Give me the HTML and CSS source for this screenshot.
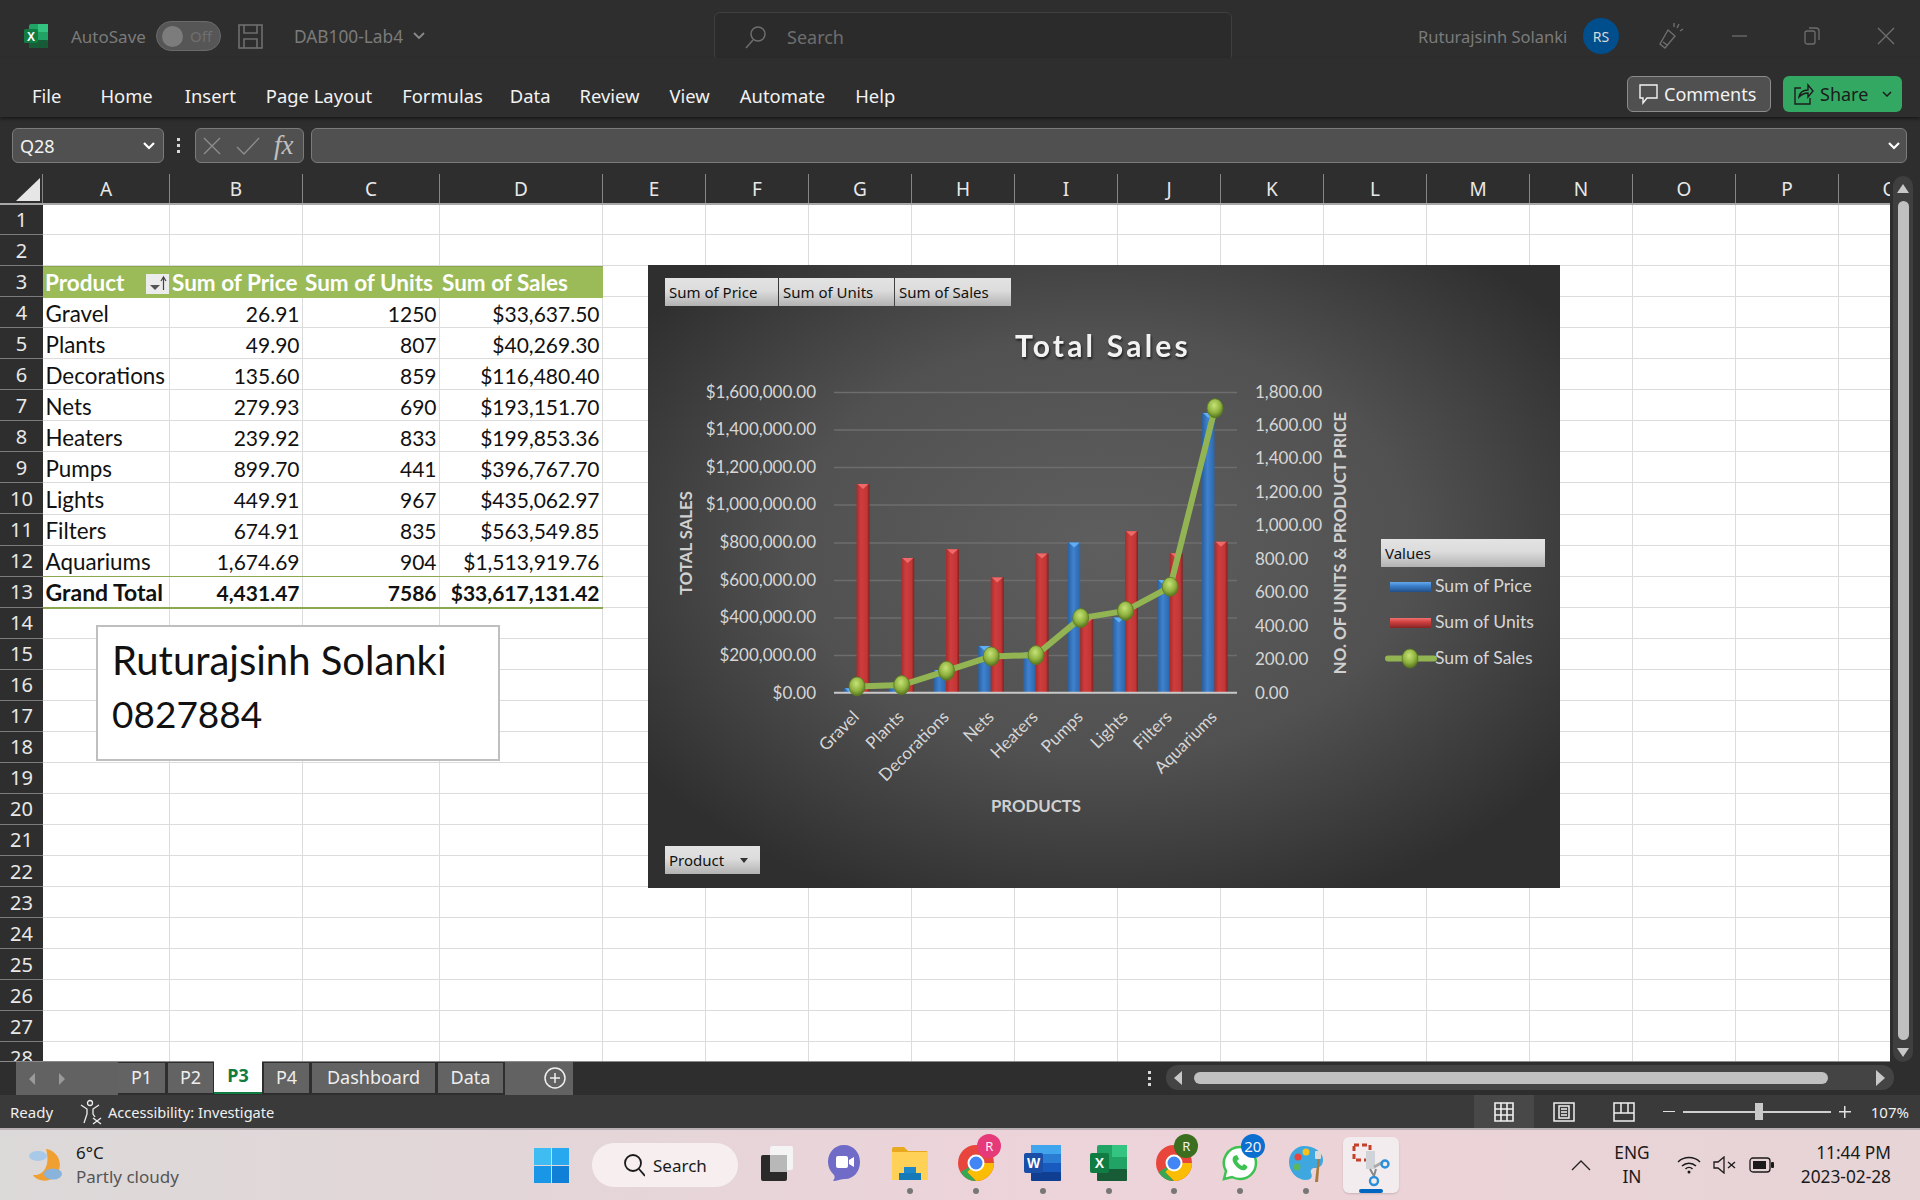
FILE: index.html
```html
<!DOCTYPE html>
<html lang="en">
<head>
    <meta charset="UTF-8">
    <title>DAB100-Lab4 - Excel</title>
    <link rel="stylesheet" href="styles.css">
</head>
<body>
<div class="window">

    <!-- title bar -->
    <header class="titlebar">
        <div class="title-left">
            <svg class="xl-logo" width="24" height="24" viewBox="0 0 24 24">
                <rect x="5" y="0" width="19" height="24" rx="2" fill="#21a366"/>
                <rect x="14" y="0" width="10" height="8" fill="#33c481"/>
                <rect x="5" y="16" width="19" height="8" rx="1" fill="#185c37"/>
                <rect x="0" y="5" width="14" height="14" rx="1.5" fill="#107c41"/>
                <text x="7" y="16.5" text-anchor="middle" class="xl-letter">X</text>
            </svg>
            <span class="autosave">AutoSave</span>
            <span class="toggle"><i class="knob"></i><span>Off</span></span>
            <svg class="save-icon" width="25" height="25" viewBox="0 0 25 25" fill="none" stroke="#6e6e6e" stroke-width="1.6">
                <rect x="1" y="1" width="23" height="23"/>
                <path d="M6 1v8h13V1M6 24v-9h13v9"/>
            </svg>
            <span class="docname">DAB100-Lab4</span>
            <svg width="12" height="8" viewBox="0 0 12 8" fill="none" stroke="#8a8a8a" stroke-width="1.8"><path d="M1 1l5 5 5-5"/></svg>
        </div>
        <div class="title-search">
            <svg width="22" height="24" viewBox="0 0 22 24" fill="none" stroke="#6e6e6e" stroke-width="1.5"><circle cx="13" cy="9" r="7"/><path d="M8 15L1 23"/></svg>
            <span>Search</span>
        </div>
        <div class="title-right">
            <span class="username">Ruturajsinh Solanki</span>
            <span class="avatar">RS</span>
            <svg class="pen" width="26" height="28" viewBox="0 0 26 28" fill="none" stroke="#6e6e6e" stroke-width="1.4"><path d="M10 8L2 22l5 4 10-12zM5 20l4 3M19 6l2-4M22 9l3-2M16 5l0-4"/></svg>
            <svg class="win-btn" width="16" height="16" viewBox="0 0 16 16" stroke="#6e6e6e" stroke-width="1.3"><path d="M0 8h15"/></svg>
            <svg class="win-btn" width="16" height="18" viewBox="0 0 16 18" fill="none" stroke="#6e6e6e" stroke-width="1.3"><rect x="1" y="4" width="10" height="13" rx="2"/><path d="M5 1h7a3 3 0 0 1 3 3v9"/></svg>
            <svg class="win-btn" width="20" height="20" viewBox="0 0 20 20" stroke="#6e6e6e" stroke-width="1.4"><path d="M2 2l16 16M18 2L2 18"/></svg>
        </div>
    </header>

    <!-- ribbon tabs -->
    <nav class="menubar">
        <ul class="menu">
            <li class="menu-file">File</li>
            <li class="menu-home">Home</li>
            <li>Insert</li>
            <li>Page Layout</li>
            <li class="menu-formulas">Formulas</li>
            <li class="menu-data">Data</li>
            <li>Review</li>
            <li>View</li>
            <li>Automate</li>
            <li>Help</li>
        </ul>
        <div class="menu-actions">
            <button class="btn-comments">
                <svg width="20" height="22" viewBox="0 0 20 22" fill="none" stroke="#f2f2f2" stroke-width="1.4"><path d="M1 2h17v13H8l-4 5v-5H1z"/></svg>
                Comments
            </button>
            <button class="btn-share">
                <svg width="20" height="22" viewBox="0 0 20 22" fill="none" stroke="#1c1c1c" stroke-width="1.4"><path d="M7 5H1v16h15v-6M5 14c1-5 5-7 9-7V2l5 6-5 6V10c-3 0-6 1-9 4z"/></svg>
                <span>Share</span>
                <svg class="share-arrow" width="10" height="6" viewBox="0 0 10 6" fill="none" stroke="#1c1c1c" stroke-width="1.5"><path d="M1 1l4 4 4-4"/></svg>
            </button>
        </div>
    </nav>

    <!-- formula bar -->
    <div class="formulabar">
        <div class="namebox">
            <span>Q28</span>
            <svg width="12" height="8" viewBox="0 0 12 8" fill="none" stroke="#fff" stroke-width="2.2"><path d="M1 1l5 5 5-5"/></svg>
        </div>
        <div class="fb-dots"><i></i><i></i><i></i></div>
        <div class="fx-box">
            <svg width="20" height="20" viewBox="0 0 20 20" stroke="#8e8e8e" stroke-width="1.3"><path d="M2 2l16 16M18 2L2 18"/></svg>
            <svg width="24" height="20" viewBox="0 0 24 20" fill="none" stroke="#8e8e8e" stroke-width="1.3"><path d="M1 11l7 7L23 2"/></svg>
            <span class="fx">fx</span>
        </div>
        <div class="formula-input">
            <svg width="12" height="8" viewBox="0 0 12 8" fill="none" stroke="#fff" stroke-width="2.2"><path d="M1 1l5 5 5-5"/></svg>
        </div>
    </div>

    <!-- worksheet -->
    <section class="sheet">
        <div class="sheet-main">
            <div class="col-head">
                <div class="corner"><svg width="24" height="23" viewBox="0 0 24 23"><path d="M24 0v23H0z" fill="#e6e6e6"/></svg></div>
                <div>A</div><div>B</div><div>C</div><div>D</div><div>E</div><div>F</div><div>G</div><div>H</div><div>I</div>
                <div>J</div><div>K</div><div>L</div><div>M</div><div>N</div><div>O</div><div>P</div><div>Q</div>
            </div>
            <div class="sheet-body">
                <div class="row-head">
                    <div>1</div><div>2</div><div>3</div><div>4</div><div>5</div><div>6</div><div>7</div>
                    <div>8</div><div>9</div><div>10</div><div>11</div><div>12</div><div>13</div><div>14</div>
                    <div>15</div><div>16</div><div>17</div><div>18</div><div>19</div><div>20</div><div>21</div>
                    <div>22</div><div>23</div><div>24</div><div>25</div><div>26</div><div>27</div><div>28</div>
                </div>
                <div class="cells">
                    <table class="pivot">
                        <colgroup><col class="w-a"><col class="w-b"><col class="w-c"><col class="w-d"></colgroup>
                        <thead>
                            <tr>
                                <th class="th-product">Product
                                    <span class="sort-btn"><svg width="23" height="20" viewBox="0 0 23 20"><path d="M4 11h10l-5 5z" fill="#555"/><path d="M17.5 16V4M15 7l2.5-4L20 7" stroke="#444" stroke-width="1.2" fill="none"/></svg></span>
                                </th>
                                <th>Sum of Price</th><th>Sum of Units</th><th>Sum of Sales</th>
                            </tr>
                        </thead>
                        <tbody>
                            <tr><td>Gravel</td><td>26.91</td><td>1250</td><td>$33,637.50</td></tr>
                            <tr><td>Plants</td><td>49.90</td><td>807</td><td>$40,269.30</td></tr>
                            <tr><td>Decorations</td><td>135.60</td><td>859</td><td>$116,480.40</td></tr>
                            <tr><td>Nets</td><td>279.93</td><td>690</td><td>$193,151.70</td></tr>
                            <tr><td>Heaters</td><td>239.92</td><td>833</td><td>$199,853.36</td></tr>
                            <tr><td>Pumps</td><td>899.70</td><td>441</td><td>$396,767.70</td></tr>
                            <tr><td>Lights</td><td>449.91</td><td>967</td><td>$435,062.97</td></tr>
                            <tr><td>Filters</td><td>674.91</td><td>835</td><td>$563,549.85</td></tr>
                            <tr><td>Aquariums</td><td>1,674.69</td><td>904</td><td>$1,513,919.76</td></tr>
                        </tbody>
                        <tfoot>
                            <tr><td>Grand Total</td><td>4,431.47</td><td>7586</td><td>$33,617,131.42</td></tr>
                        </tfoot>
                    </table>

                    <div class="textbox">Ruturajsinh Solanki<br><span class="textbox-id">0827884</span></div>

                    <div class="chart">
                        <svg width="912" height="623" viewBox="648 265 912 623">
                            <defs>
                                <radialGradient id="chart-bg" cx="50%" cy="45%" r="62%">
                                    <stop offset="0" stop-color="#5e5e5e"/>
                                    <stop offset="0.55" stop-color="#515151"/>
                                    <stop offset="1" stop-color="#2f2f2f"/>
                                </radialGradient>
                                <linearGradient id="red-bar">
                                    <stop offset="0" stop-color="#a52d2d"/>
                                    <stop offset="0.35" stop-color="#cf3d3d"/>
                                    <stop offset="0.8" stop-color="#c23636"/>
                                    <stop offset="1" stop-color="#7f2020"/>
                                </linearGradient>
                                <linearGradient id="blue-bar">
                                    <stop offset="0" stop-color="#2a5f9e"/>
                                    <stop offset="0.45" stop-color="#3f82cf"/>
                                    <stop offset="1" stop-color="#2c66aa"/>
                                </linearGradient>
                                <radialGradient id="dot" cx="45%" cy="35%" r="65%">
                                    <stop offset="0" stop-color="#c6e277"/>
                                    <stop offset="0.6" stop-color="#8fb23f"/>
                                    <stop offset="1" stop-color="#56731f"/>
                                </radialGradient>
                                <linearGradient id="key-blue" x2="0" y2="1">
                                    <stop offset="0" stop-color="#64a8ee"/>
                                    <stop offset="0.4" stop-color="#3b7fcb"/>
                                    <stop offset="1" stop-color="#224f86"/>
                                </linearGradient>
                                <linearGradient id="key-red" x2="0" y2="1">
                                    <stop offset="0" stop-color="#f07070"/>
                                    <stop offset="0.4" stop-color="#d04040"/>
                                    <stop offset="1" stop-color="#842424"/>
                                </linearGradient>
                                <polygon id="cap-red" points="1,0 12,0 6.5,5" fill="#ee6a6a"/>
                                <polygon id="cap-blue" points="1,0 12,0 6.5,5" fill="#62aef2"/>
                                <ellipse id="mark" rx="8" ry="9.5" fill="url(#dot)" stroke="#5a7a22" stroke-width="0.8"/>
                            </defs>

                            <rect x="648" y="265" width="912" height="623" fill="url(#chart-bg)"/>

                            <g class="gridlines">
                                <path d="M834 392.5H1237M834 430H1237M834 467.5H1237M834 505H1237M834 543H1237M834 580.5H1237M834 618H1237M834 655.5H1237"/>
                            </g>

                            <g class="tick-l">
                                <text x="816" y="398">$1,600,000.00</text>
                                <text x="816" y="435">$1,400,000.00</text>
                                <text x="816" y="473">$1,200,000.00</text>
                                <text x="816" y="510">$1,000,000.00</text>
                                <text x="816" y="548">$800,000.00</text>
                                <text x="816" y="586">$600,000.00</text>
                                <text x="816" y="623">$400,000.00</text>
                                <text x="816" y="661">$200,000.00</text>
                                <text x="816" y="699">$0.00</text>
                            </g>
                            <g class="tick-r">
                                <text x="1255" y="398">1,800.00</text>
                                <text x="1255" y="431">1,600.00</text>
                                <text x="1255" y="464">1,400.00</text>
                                <text x="1255" y="498">1,200.00</text>
                                <text x="1255" y="531">1,000.00</text>
                                <text x="1255" y="565">800.00</text>
                                <text x="1255" y="598">600.00</text>
                                <text x="1255" y="632">400.00</text>
                                <text x="1255" y="665">200.00</text>
                                <text x="1255" y="699">0.00</text>
                            </g>

                            <!-- price bars -->
                            <g fill="url(#blue-bar)">
                                <rect x="844" y="688.2" width="12.5" height="4.5"/><use href="#cap-blue" x="844" y="688.2"/>
                                <rect x="888.7" y="684.4" width="12.5" height="8.3"/><use href="#cap-blue" x="888.7" y="684.4"/>
                                <rect x="933.5" y="670" width="12.5" height="22.7"/><use href="#cap-blue" x="933.5" y="670"/>
                                <rect x="978.2" y="645.9" width="12.5" height="46.8"/><use href="#cap-blue" x="978.2" y="645.9"/>
                                <rect x="1023" y="652.6" width="12.5" height="40.1"/><use href="#cap-blue" x="1023" y="652.6"/>
                                <rect x="1067.7" y="542.4" width="12.5" height="150.3"/><use href="#cap-blue" x="1067.7" y="542.4"/>
                                <rect x="1112.5" y="617.5" width="12.5" height="75.2"/><use href="#cap-blue" x="1112.5" y="617.5"/>
                                <rect x="1157.2" y="580" width="12.5" height="112.7"/><use href="#cap-blue" x="1157.2" y="580"/>
                                <rect x="1202" y="412.9" width="12.5" height="279.8"/><use href="#cap-blue" x="1202" y="412.9"/>
                            </g>
                            <!-- units bars -->
                            <g fill="url(#red-bar)">
                                <rect x="856.5" y="483.9" width="13" height="208.8"/><use href="#cap-red" x="856.5" y="483.9"/>
                                <rect x="901.2" y="557.9" width="13" height="134.8"/><use href="#cap-red" x="901.2" y="557.9"/>
                                <rect x="946" y="549.2" width="13" height="143.5"/><use href="#cap-red" x="946" y="549.2"/>
                                <rect x="990.7" y="577.4" width="13" height="115.3"/><use href="#cap-red" x="990.7" y="577.4"/>
                                <rect x="1035.5" y="553.5" width="13" height="139.2"/><use href="#cap-red" x="1035.5" y="553.5"/>
                                <rect x="1080.2" y="619" width="13" height="73.7"/><use href="#cap-red" x="1080.2" y="619"/>
                                <rect x="1125" y="531.2" width="13" height="161.5"/><use href="#cap-red" x="1125" y="531.2"/>
                                <rect x="1169.7" y="553.2" width="13" height="139.5"/><use href="#cap-red" x="1169.7" y="553.2"/>
                                <rect x="1214.5" y="541.7" width="13" height="151"/><use href="#cap-red" x="1214.5" y="541.7"/>
                            </g>
                            <path class="axis" d="M834 692.7H1237"/>

                            <polyline class="sales-line" points="857,686.4 901.7,685.1 946.5,670.8 991.2,656.4 1036,655.1 1080.7,618.1 1125.5,610.9 1170.2,586.8 1215,408.2"/>
                            <use href="#mark" x="857" y="686.4"/>
                            <use href="#mark" x="901.7" y="685.1"/>
                            <use href="#mark" x="946.5" y="670.8"/>
                            <use href="#mark" x="991.2" y="656.4"/>
                            <use href="#mark" x="1036" y="655.1"/>
                            <use href="#mark" x="1080.7" y="618.1"/>
                            <use href="#mark" x="1125.5" y="610.9"/>
                            <use href="#mark" x="1170.2" y="586.8"/>
                            <use href="#mark" x="1215" y="408.2"/>

                            <g class="cat-labels">
                                <text transform="translate(860,718) rotate(-45)">Gravel</text>
                                <text transform="translate(905,718) rotate(-45)">Plants</text>
                                <text transform="translate(950,718) rotate(-45)">Decorations</text>
                                <text transform="translate(995,718) rotate(-45)">Nets</text>
                                <text transform="translate(1039,718) rotate(-45)">Heaters</text>
                                <text transform="translate(1084,718) rotate(-45)">Pumps</text>
                                <text transform="translate(1129,718) rotate(-45)">Lights</text>
                                <text transform="translate(1173,718) rotate(-45)">Filters</text>
                                <text transform="translate(1218,718) rotate(-45)">Aquariums</text>
                            </g>

                            <text class="chart-title" x="1103" y="357">Total Sales</text>
                            <text class="axis-title" transform="translate(692,543) rotate(-90)">TOTAL SALES</text>
                            <text class="axis-title" transform="translate(1346,543) rotate(-90)">NO. OF UNITS &amp; PRODUCT PRICE</text>
                            <text class="axis-title" x="1036" y="812">PRODUCTS</text>

                            <!-- legend keys -->
                            <rect x="1390" y="582" width="41" height="10" fill="url(#key-blue)"/>
                            <rect x="1390" y="618" width="41" height="10" fill="url(#key-red)"/>
                            <path class="legend-line" d="M1388 658.5H1434"/>
                            <use href="#mark" x="1410" y="658.5"/>
                            <g class="legend-text">
                                <text x="1435" y="592">Sum of Price</text>
                                <text x="1435" y="628">Sum of Units</text>
                                <text x="1435" y="664">Sum of Sales</text>
                            </g>
                        </svg>
                        <div class="field-row">
                            <span class="field w-price">Sum of Price</span>
                            <span class="field w-units">Sum of Units</span>
                            <span class="field w-sales">Sum of Sales</span>
                        </div>
                        <span class="field field-values">Values</span>
                        <span class="field field-product">Product<i class="field-caret"></i></span>
                    </div>
                </div>
            </div>
        </div>
        <aside class="vscroll">
            <div class="vtrack">
                <i class="tri-up"></i>
                <div class="vthumb"></div>
                <i class="tri-down"></i>
            </div>
        </aside>
    </section>

    <!-- sheet tabs -->
    <div class="tabbar">
        <div class="tab-nav"><i class="tri-left"></i><i class="tri-right"></i></div>
        <div class="tab">P1</div>
        <div class="tab">P2</div>
        <div class="tab active">P3</div>
        <div class="tab">P4</div>
        <div class="tab">Dashboard</div>
        <div class="tab">Data</div>
        <div class="tab-add">
            <svg width="24" height="24" viewBox="0 0 24 24" fill="none" stroke="#f0f0f0" stroke-width="1.5"><circle cx="12" cy="12" r="10"/><path d="M12 7v10M7 12h10"/></svg>
        </div>
        <div class="tab-dots"><i></i><i></i><i></i></div>
        <div class="hscroll">
            <i class="hs-left"></i>
            <div class="hthumb"></div>
            <i class="hs-right"></i>
        </div>
    </div>

    <!-- status bar -->
    <footer class="statusbar">
        <span class="ready">Ready</span>
        <svg class="a11y" width="24" height="26" viewBox="0 0 24 26" fill="none" stroke="#eee" stroke-width="1.3"><circle cx="10" cy="4" r="2.5"/><path d="M1 6l6 4v5l-3 9M19 6l-6 4v5l2 3M13 19l8 6M21 19l-8 6"/></svg>
        <span class="a11y-text">Accessibility: Investigate</span>
        <div class="status-right">
            <div class="view-btn active">
                <svg width="20" height="20" viewBox="0 0 20 20" fill="none" stroke="#f0f0f0" stroke-width="1.6"><path d="M1 1h18v18H1zM7 1v18M13 1v18M1 7h18M1 13h18"/></svg>
            </div>
            <div class="view-btn">
                <svg width="22" height="20" viewBox="0 0 22 20" fill="none" stroke="#f0f0f0" stroke-width="1.5"><rect x="1" y="1" width="20" height="18"/><rect x="6" y="4" width="10" height="12"/><path d="M8 7h6M8 10h6M8 13h6"/></svg>
            </div>
            <div class="view-btn">
                <svg width="22" height="20" viewBox="0 0 22 20" fill="none" stroke="#f0f0f0" stroke-width="1.5"><path d="M1 1h20v18H1zM8 1v10h7V1M1 11h7M15 11h6"/></svg>
            </div>
            <div class="zoom">
                <span class="zoom-minus"></span>
                <div class="zoom-track"><i class="zoom-thumb"></i></div>
                <span class="zoom-plus"></span>
            </div>
            <span class="zoom-pct">107%</span>
        </div>
    </footer>

    <!-- windows taskbar -->
    <div class="taskbar">
        <div class="weather">
            <svg width="36" height="36" viewBox="0 0 36 36">
                <path d="M18 2a16 16 0 0 1 3 31c-6 2-14-1-16-5 9 1 18-7 13-26z" fill="#f0a030"/>
                <ellipse cx="10" cy="9" rx="9" ry="5" fill="#a9c9e8"/>
                <ellipse cx="25" cy="27" rx="9" ry="5.5" fill="#8ab3dc"/>
            </svg>
            <div class="weather-text">
                <div class="temp">6°C</div>
                <div class="sky">Partly cloudy</div>
            </div>
        </div>
        <div class="tb-center">
            <svg class="win-logo" width="35" height="35" viewBox="0 0 35 35">
                <rect width="17" height="17" x="0" y="0" fill="#3fbdf3"/>
                <rect width="17" height="17" x="18" y="0" fill="#28a8ee"/>
                <rect width="17" height="17" x="0" y="18" fill="#1a96e6"/>
                <rect width="17" height="17" x="18" y="18" fill="#0f7fd8"/>
            </svg>
            <div class="tb-search">
                <svg width="22" height="24" viewBox="0 0 22 24" fill="none" stroke="#1a1a1a" stroke-width="1.8"><circle cx="10" cy="10" r="8"/><path d="M16 16l6 7"/></svg>
                <span>Search</span>
            </div>
            <div class="tb-app">
                <svg width="36" height="36" viewBox="0 0 36 36"><rect x="11" y="1" width="23" height="24" rx="2" fill="#f4f4f4"/><rect x="2" y="10" width="26" height="26" rx="2" fill="#2a2a2a"/><rect x="11" y="10" width="17" height="17" fill="#b8b8b8"/></svg>
            </div>
            <div class="tb-app">
                <svg width="36" height="38" viewBox="0 0 36 38"><path d="M18 1c10 0 16 8 16 17s-6 17-15 17c-4 0-8 2-12 2 2-3 2-4 1-6-4-4-6-8-6-13C2 9 8 1 18 1z" fill="#6f6bc6"/><rect x="10" y="12" width="12" height="12" rx="2" fill="#fff"/><path d="M23 16l5-3v10l-5-3z" fill="#fff"/></svg>
            </div>
            <div class="tb-app running">
                <svg width="38" height="36" viewBox="0 0 38 36"><path d="M1 4a2 2 0 0 1 2-2h10l4 4h18a2 2 0 0 1 2 2v26H1z" fill="#e8a91e"/><rect x="1" y="7" width="36" height="28" fill="#ffd257"/><path d="M13 22h12v6h-12z" fill="#1c86c8"/><path d="M8 28h22v7H8z" fill="#1679b8"/></svg>
            </div>
            <div class="tb-app running">
                <svg class="chrome" width="36" height="36" viewBox="0 0 36 36"><circle cx="18" cy="18" r="18" fill="#e8453c"/><path d="M18 18H36A18 18 0 0 1 18 36L9 27z" fill="#fbbc04"/><path d="M18 18L9 27l9 9A18 18 0 0 1 2.5 27z" fill="#34a853"/><circle cx="18" cy="18" r="8.5" fill="#fff"/><circle cx="18" cy="18" r="6.5" fill="#4285f4"/></svg>
                <span class="badge badge-pink">R</span>
            </div>
            <div class="tb-app running">
                <svg width="38" height="36" viewBox="0 0 38 36"><rect x="7" y="0" width="30" height="36" rx="2" fill="#2b7cd3"/><rect x="7" y="0" width="30" height="9" fill="#41a5ee"/><rect x="7" y="18" width="30" height="9" fill="#185abd"/><rect x="7" y="27" width="30" height="9" rx="1" fill="#103f91"/><rect x="0" y="8" width="19" height="20" rx="2" fill="#1a4fa8"/><text x="9.5" y="23" text-anchor="middle" class="app-letter">W</text></svg>
            </div>
            <div class="tb-app running">
                <svg width="38" height="36" viewBox="0 0 38 36"><rect x="7" y="0" width="30" height="36" rx="2" fill="#21a366"/><rect x="22" y="0" width="15" height="12" fill="#33c481"/><rect x="7" y="24" width="30" height="12" rx="1" fill="#185c37"/><rect x="0" y="8" width="19" height="20" rx="2" fill="#107c41"/><text x="9.5" y="23" text-anchor="middle" class="app-letter">X</text></svg>
            </div>
            <div class="tb-app running tb-chrome2">
                <svg class="chrome" width="36" height="36" viewBox="0 0 36 36"><circle cx="18" cy="18" r="18" fill="#e8453c"/><path d="M18 18H36A18 18 0 0 1 18 36L9 27z" fill="#fbbc04"/><path d="M18 18L9 27l9 9A18 18 0 0 1 2.5 27z" fill="#34a853"/><circle cx="18" cy="18" r="8.5" fill="#fff"/><circle cx="18" cy="18" r="6.5" fill="#4285f4"/></svg>
                <span class="badge badge-green">R</span>
            </div>
            <div class="tb-app running">
                <svg width="36" height="36" viewBox="0 0 36 36"><path d="M18 2a16 16 0 0 1 0 32c-3 0-6-1-8-2l-8 2 2-8a16 16 0 0 1 14-24z" fill="#fff" stroke="#3dc252" stroke-width="2.5"/><path d="M12 11c-2 2-2 5 1 9s7 6 10 5c2-1 3-3 2-4l-3-2-2 2c-2-1-4-3-5-5l2-2-2-4z" fill="#3dc252"/></svg>
                <span class="badge badge-blue">20</span>
            </div>
            <div class="tb-app running">
                <svg width="36" height="38" viewBox="0 0 36 38"><path d="M16 2C8 2 1 9 1 18c0 10 8 18 17 18 5 0 7-3 5-7-1-3 1-5 4-5 4 0 8-2 8-8C35 8 26 2 16 2z" fill="#3fa7e0"/><circle cx="10" cy="13" r="3.5" fill="#e8453c"/><circle cx="18" cy="8" r="3.5" fill="#f7c21b"/><circle cx="9" cy="23" r="3.5" fill="#5cb85c"/><path d="M30 12l2 1-2 25h-3z" fill="#a87a3d"/><rect x="27" y="7" width="6" height="8" rx="1" fill="#d9d9d9"/></svg>
            </div>
            <div class="tb-app current">
                <svg width="38" height="44" viewBox="0 0 38 44"><rect x="2" y="2" width="16" height="15" fill="none" stroke="#c4402b" stroke-width="3" stroke-dasharray="5 3"/><path d="M14 8h9v18H14z" fill="#d0d4d8"/><path d="M18 26l4 7M24 26l-2 7" stroke="#888" stroke-width="2"/><path d="M22 24l9-5" stroke="#aaa" stroke-width="3"/><circle cx="33" cy="21" r="3.5" fill="none" stroke="#2a8fd8" stroke-width="2.4"/><circle cx="22" cy="38" r="4" fill="none" stroke="#2a8fd8" stroke-width="2.4"/></svg>
            </div>
        </div>
        <div class="tray">
            <svg class="tray-chev" width="20" height="11" viewBox="0 0 20 11" fill="none" stroke="#222" stroke-width="1.3"><path d="M1 10l9-9 9 9"/></svg>
            <div class="lang">ENG<br>IN</div>
            <svg width="24" height="18" viewBox="0 0 24 18" fill="none" stroke="#1a1a1a" stroke-width="1.5"><path d="M1 6a16 16 0 0 1 22 0M5 10a10 10 0 0 1 14 0M8.5 13a5 5 0 0 1 7 0"/><circle cx="12" cy="16" r="1.5" fill="#1a1a1a" stroke="none"/></svg>
            <svg width="24" height="18" viewBox="0 0 24 18" fill="none" stroke="#1a1a1a" stroke-width="1.3"><path d="M1 6h4l6-5v16l-6-5H1zM15 6l7 6M22 6l-7 6"/></svg>
            <svg width="25" height="16" viewBox="0 0 25 16"><rect x="1" y="1" width="20" height="14" rx="3" fill="none" stroke="#1a1a1a" stroke-width="1.3"/><rect x="4" y="4" width="13" height="8" fill="#1a1a1a"/><rect x="22" y="5" width="3" height="6" rx="1" fill="#1a1a1a"/></svg>
            <div class="clock">11:44 PM<br>2023-02-28</div>
        </div>
    </div>
</div>
</body>
</html>
```

FILE: styles.css
```css
* { box-sizing: border-box; }
html, body { margin: 0; padding: 0; }
body { width: 1920px; height: 1200px; overflow: hidden; font-family: "Noto Sans", sans-serif; background: #2e2e2e; }
.window { display: flex; flex-direction: column; width: 1920px; height: 1200px; }
svg { display: block; flex: none; }
i { display: block; font-style: normal; }

/* title bar */
.titlebar { display: flex; align-items: center; height: 58px; padding: 14px 0 0 24px; background: #2e2e2e; color: #7b7b7b; font-size: 17px; position: relative; }
.title-left { display: flex; align-items: center; }
.xl-letter { font: bold 12px "Liberation Sans", sans-serif; fill: #fff; }
.autosave { margin-left: 23px; width: 85px; }
.toggle { display: flex; align-items: center; justify-content: space-between; width: 65px; height: 30px; padding: 0 8px 0 5px; border: 1px solid #6a6a6a; border-radius: 15px; background: #565656; font-size: 15px; color: #6f6f6f; }
.knob { width: 21px; height: 21px; border-radius: 50%; background: #7c7c7c; }
.save-icon { margin-left: 17px; }
.docname { margin: 0 10px 0 31px; font-size: 17.3px; }
.title-search { position: absolute; left: 714px; top: 12px; display: flex; align-items: center; gap: 20px; width: 518px; height: 49px; padding-left: 30px; border: 1px solid #3f3f3f; border-radius: 6px; background: #2b2b2b; font-size: 18px; color: #6e6e6e; }
.title-right { display: flex; align-items: center; margin-left: auto; }
.username { width: 165px; font-size: 16.5px; }
.avatar { display: flex; align-items: center; justify-content: center; width: 36px; height: 36px; border-radius: 50%; background: #004e8c; color: #d8d8d8; font-size: 14px; }
.pen { margin: 0 48px 0 39px; }
.win-btn { margin-right: 56px; }
.win-btn:last-child { margin-right: 24px; margin-left: 0; }

/* ribbon tabs */
.menubar { display: flex; justify-content: space-between; height: 59px; padding: 0 18px 0 32px; background: #2e2e2e; box-shadow: 0 2px 3px rgba(0, 0, 0, .45); position: relative; }
.menu { display: flex; gap: 30px; margin: 0; padding: 16px 0 0; list-style: none; align-items: center; color: #f2f2f2; font-size: 18.4px; }
.menu-file { margin-right: 9px; }
.menu-home { margin-right: 2px; }
.menu-formulas { margin-right: -3px; }
.menu-data { margin-right: -1px; }
.menu-actions { display: flex; gap: 12px; padding-top: 18px; }
.menu-actions button { display: flex; align-items: center; height: 36px; border-radius: 6px; font: 18px "Noto Sans", sans-serif; }
.btn-comments { gap: 5px; width: 144px; padding: 0 0 0 11px; border: 1px solid #8c8c8c; background: #505050; color: #f2f2f2; }
.btn-share { gap: 6px; width: 119px; padding: 0 0 0 11px; border: 0; background: #33a862; color: #1c1c1c; }
.share-arrow { margin-left: 8px; }

/* formula bar */
.formulabar { display: flex; align-items: center; height: 57px; padding: 0 13px 0 12px; }
.namebox { display: flex; align-items: center; justify-content: space-between; width: 152px; height: 35px; padding: 0 8px 0 7px; border: 1px solid #7b7b7b; border-radius: 6px; background: #505050; color: #f2f2f2; font-size: 18px; }
.fb-dots { display: flex; flex-direction: column; gap: 3px; width: 31px; padding-left: 13px; }
.fb-dots i, .tab-dots i { width: 3px; height: 3px; background: #d8d8d8; }
.fx-box { display: flex; align-items: center; gap: 14px; width: 109px; height: 35px; padding: 0 0 0 6px; border: 1px solid #7b7b7b; border-radius: 6px; background: #505050; }
.fx { font: italic 27px "Liberation Serif", serif; color: #c0c0c0; }
.formula-input { display: flex; align-items: center; justify-content: flex-end; flex: 1; height: 35px; margin-left: 7px; padding-right: 6px; border: 1px solid #7b7b7b; border-radius: 6px; background: #505050; }

/* worksheet */
.sheet { display: flex; height: 888px; }
.sheet-main { width: 1890px; overflow: hidden; border-bottom: 1px solid #8a8a8a; }
.col-head { display: grid; grid-template-columns: 43px 127px 133px 137px 163px repeat(13, 103px); height: 29px; color: #e8e8e8; font-size: 19px; }
.col-head div { display: flex; align-items: center; justify-content: center; border-right: 1px solid #858585; }
.col-head .corner { align-items: flex-end; justify-content: flex-end; padding: 0 2px 2px 0; }
.sheet-body { display: flex; height: 859px; border-top: 2px solid #a8a8a8; }
.row-head { width: 43px; flex: none; color: #e8e8e8; font-size: 20px; }
.row-head div { display: flex; align-items: center; justify-content: center; height: 31.05px; border-bottom: 1px solid #7c7c7c; background: #2e2e2e; }
.row-head div:first-child { height: 30.05px; }
.cells {
    position: relative; flex: 1; padding-top: 61px;
    background-color: #fff;
    background-image:
        repeating-linear-gradient(to bottom, transparent 0 30.05px, #dcdcdc 30.05px 31.05px),
        linear-gradient(#dcdcdc, #dcdcdc), linear-gradient(#dcdcdc, #dcdcdc), linear-gradient(#dcdcdc, #dcdcdc), linear-gradient(#dcdcdc, #dcdcdc),
        repeating-linear-gradient(to right, #dcdcdc 0 1px, transparent 1px 103px);
    background-size: 100% 100%, 1px 100%, 1px 100%, 1px 100%, 1px 100%, 100% 100%;
    background-position: 0 -1px, 126px 0, 259px 0, 396px 0, 559px 0, 662px 0;
    background-repeat: no-repeat;
}

/* pivot table */
.pivot { table-layout: fixed; width: 560px; border-collapse: collapse; font-family: Lato, sans-serif; font-size: 21px; color: #111; }
.w-a { width: 127px; } .w-b { width: 133px; } .w-c { width: 137px; } .w-d { width: 163px; }
.pivot th, .pivot td { height: 31.05px; padding: 0 3.5px; white-space: nowrap; overflow: hidden; text-align: right; font-weight: normal; }
.pivot th { padding: 0 2px; background: #9bbb59; border-top: 1px solid #8aa64e; color: #fff; font-size: 22.5px; font-weight: bold; text-align: left; }
.pivot td:first-child { padding-left: 2.5px; font-size: 22.4px; text-align: left; }
.th-product { position: relative; }
.sort-btn { position: absolute; right: 1px; top: 7px; width: 23px; height: 20px; background: #ececec; }
.pivot tfoot td { border-top: 1px solid #8aa64e; border-bottom: 2px solid #8aa64e; font-weight: bold; }
.pivot tfoot td:first-child { font-size: 23px; }

/* floating shapes */
.textbox { position: absolute; left: 53px; top: 420px; width: 404px; height: 136px; padding: 7px 14px; border: 2px solid #bfbfbf; background: #fff; font: 40px/52.7px Lato, sans-serif; color: #111; }
.textbox-id { font-size: 37px; }
.chart { position: absolute; left: 605px; top: 60px; width: 912px; height: 623px; }
.chart svg text { font-family: Lato, sans-serif; }
.gridlines path { stroke: #6d6d6d; stroke-width: 1.5; fill: none; }
.axis { stroke: #c8c8c8; stroke-width: 2; fill: none; }
.tick-l text { text-anchor: end; font-size: 17px; fill: #d6d6d6; }
.tick-r text { font-size: 17px; fill: #d6d6d6; }
.legend-text text { font-size: 17.6px; fill: #d6d6d6; }
.cat-labels text { text-anchor: end; font-size: 17px; fill: #d6d6d6; }
.chart-title { text-anchor: middle; font-size: 30px; font-weight: bold; letter-spacing: 3.2px; fill: #f2f2f2; filter: drop-shadow(1px 2px 1px rgba(0, 0, 0, .6)); }
.axis-title { text-anchor: middle; font-size: 16.8px; font-weight: bold; fill: #d0d0d0; }
.sales-line { fill: none; stroke: #93b452; stroke-width: 6; stroke-linejoin: round; }
.legend-line { stroke: #93b452; stroke-width: 6; stroke-linecap: round; fill: none; }
.field-row { position: absolute; left: 17px; top: 13px; display: flex; gap: 1px; }
.field { display: flex; align-items: center; height: 28px; padding-left: 4px; background: linear-gradient(#e3e3e3, #dcdcdc 45%, #b2b2b2); color: #111; font: 15px "Noto Sans", sans-serif; }
.w-price { width: 113px; } .w-units { width: 115px; } .w-sales { width: 116px; }
.field-values { position: absolute; left: 733px; top: 274px; width: 164px; }
.field-product { position: absolute; left: 17px; top: 581px; width: 95px; }
.field-caret { margin-left: 16px; width: 0; height: 0; border-style: solid; border-width: 5px 4.5px 0; border-color: #333 transparent transparent; }

/* scroll bars */
.vscroll { flex: 1; padding: 2px 7px 0 3px; background: #2e2e2e; }
.vtrack { display: flex; flex-direction: column; align-items: center; gap: 8px; height: 886px; padding-top: 8px; border-radius: 10px; background: #3f3f3f; }
.vthumb { width: 11px; height: 839px; border-radius: 6px; background: #c0c0c0; }
.tri-up { width: 0; height: 0; border-style: solid; border-width: 0 6.5px 9px; border-color: transparent transparent #c8c8c8; }
.tri-down { width: 0; height: 0; border-style: solid; border-width: 9px 6.5px 0; border-color: #c8c8c8 transparent transparent; }

/* sheet tabs */
.tabbar { display: flex; align-items: flex-start; height: 33px; padding-left: 16px; background: #2e2e2e; color: #eee; font-size: 18px; }
.tab-nav { display: flex; align-items: center; gap: 24px; width: 102px; height: 33px; padding-left: 13px; background: #626262; }
.tri-left { width: 0; height: 0; border-style: solid; border-width: 6px 6px 6px 0; border-color: transparent #9a9a9a transparent transparent; }
.tri-right { width: 0; height: 0; border-style: solid; border-width: 6px 0 6px 6px; border-color: transparent transparent transparent #9a9a9a; }
.tab { display: flex; align-items: center; justify-content: center; height: 30px; margin: 1px 3px 0 0; padding: 0 12px 3px; background: #636363; }
.tab:nth-child(2) { width: 47px; } .tab:nth-child(3) { width: 45px; } .tab:nth-child(5) { width: 45px; }
.tab:nth-child(6) { width: 123px; } .tab:nth-child(7) { width: 65px; }
.tab.active { width: 48px; height: 33px; margin: -1px 2px 0 -2px; background: #fff; border-bottom: 2px solid #107c41; color: #107c41; font-weight: bold; }
.tab-add { display: flex; align-items: center; justify-content: center; width: 68px; height: 33px; margin-left: -1px; padding: 0 0 2px 32px; background: #626262; }
.tab-dots { display: flex; flex-direction: column; gap: 3px; margin: 9px 0 0 575px; }
.hscroll { display: flex; align-items: center; height: 25px; width: 728px; margin: 3px 0 0 15px; padding: 0 8px; border-radius: 12px; background: #444; position: relative; }
.hs-left { width: 0; height: 0; border-style: solid; border-width: 7px 8px 7px 0; border-color: transparent #c8c8c8 transparent transparent; }
.hs-right { width: 0; height: 0; border-style: solid; border-width: 8px 0 8px 9px; border-color: transparent transparent transparent #c8c8c8; margin-left: 48px; }
.hthumb { width: 634px; height: 12px; margin-left: 12px; border-radius: 6px; background: #c0c0c0; }

/* status bar */
.statusbar { display: flex; align-items: center; height: 33px; padding-left: 10px; background: #3a3a3a; color: #f0f0f0; font-size: 15px; }
.ready { width: 70px; }
.a11y { margin-right: 4px; }
.a11y-text { font-size: 14.6px; }
.status-right { display: flex; align-items: center; height: 33px; margin-left: auto; padding-right: 11px; }
.view-btn { display: flex; align-items: center; justify-content: center; width: 60px; height: 33px; }
.view-btn.active { background: #484848; }
.zoom { display: flex; align-items: center; gap: 8px; margin: 0 20px 0 9px; }
.zoom-minus { width: 12px; height: 1.5px; background: #e0e0e0; }
.zoom-plus { width: 12px; height: 12px; background: linear-gradient(#e0e0e0, #e0e0e0) center/12px 1.5px no-repeat, linear-gradient(#e0e0e0, #e0e0e0) center/1.5px 12px no-repeat; }
.zoom-track { display: flex; align-items: center; width: 148px; height: 2px; padding-left: 72px; background: #cfcfcf; }
.zoom-thumb { width: 8px; height: 17px; background: #c8c8c8; }
.zoom-pct { font-size: 15px; }

/* taskbar */
.taskbar { position: relative; display: flex; align-items: center; height: 72px; border-top: 2px solid #b8b0b2; background: linear-gradient(to right, #dcd9d9, #e2d6d8 25%, #edd3da 55%, #ecd3d8 70%, #e6d4d6); color: #1a1a1a; }
.weather { display: flex; align-items: center; gap: 12px; padding-left: 28px; }
.weather-text { font-size: 17px; line-height: 24px; }
.sky { color: #555; }
.tb-center { position: absolute; left: 534px; top: 0; display: flex; align-items: center; height: 70px; }
.tb-search { display: flex; align-items: center; gap: 8px; width: 146px; height: 44px; margin: 0 6px 0 23px; padding-left: 31px; border-radius: 22px; background: #f6eeef; font-size: 17px; }
.tb-app { position: relative; display: flex; align-items: center; justify-content: center; width: 66.4px; height: 70px; padding-bottom: 4px; }
.tb-chrome2 { margin-left: -2px; }
.tb-app.running::after { content: ""; position: absolute; left: 50%; bottom: 6px; width: 6px; height: 6px; margin-left: -3px; border-radius: 50%; background: #777; }
.tb-app.current { width: 56px; height: 56px; margin-left: 3px; padding: 0; border-radius: 6px; background: #f3ecee; box-shadow: 0 1px 2px rgba(0, 0, 0, .15); }
.tb-app.current::after { content: ""; position: absolute; left: 16px; bottom: 0; width: 24px; height: 4px; border-radius: 2px; background: #0067c0; }
.app-letter { font: bold 14px "Liberation Sans", sans-serif; fill: #fff; }
.badge { position: absolute; top: 4px; left: 34px; display: flex; align-items: center; justify-content: center; width: 24px; height: 24px; border-radius: 50%; font-size: 13px; color: #f2f2f2; }
.badge-pink { background: #e6397a; }
.badge-green { background: #3c6e20; }
.badge-blue { background: #0b6fd0; font-size: 15px; }
.tray { display: flex; align-items: center; margin-left: auto; padding-right: 29px; font-size: 17.3px; }
.tray-chev { margin-right: 20px; }
.lang { width: 42px; margin-right: 24px; text-align: center; line-height: 24px; }
.tray svg:nth-of-type(n+2) { margin-right: 12px; }
.clock { width: 98px; margin-left: 7px; text-align: right; line-height: 24px; }
```
